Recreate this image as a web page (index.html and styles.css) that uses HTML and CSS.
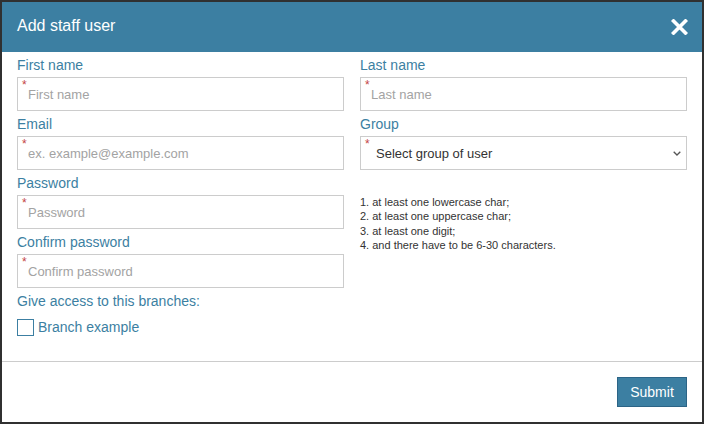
FILE: index.html
```html
<!DOCTYPE html>
<html lang="en">
<head>
<meta charset="utf-8">
<title>Add staff user</title>
<link rel="stylesheet" href="styles.css">
</head>
<body>
<div class="modal">
  <div class="modal-header">
    <h1 class="modal-title">Add staff user</h1>
    <button class="close" type="button" aria-label="Close">
      <svg width="17" height="16" viewBox="0 0 17 16"><path d="M2.5 2 L14.5 14 M14.5 2 L2.5 14" stroke="#fff" stroke-width="3.6" stroke-linecap="square" fill="none"/></svg>
    </button>
  </div>
  <div class="modal-body">
    <div class="col">
      <label class="field-label">First name</label>
      <div class="input-wrap"><span class="req">*</span><input class="input" type="text" placeholder="First name"></div>
      <label class="field-label">Email</label>
      <div class="input-wrap"><span class="req">*</span><input class="input" type="text" placeholder="ex. example@example.com"></div>
      <label class="field-label">Password</label>
      <div class="input-wrap"><span class="req">*</span><input class="input" type="password" placeholder="Password"></div>
      <label class="field-label">Confirm password</label>
      <div class="input-wrap"><span class="req">*</span><input class="input" type="password" placeholder="Confirm password"></div>
      <label class="field-label">Give access to this branches:</label>
      <label class="check-row"><span class="checkbox"></span><span>Branch example</span></label>
    </div>
    <div class="col">
      <label class="field-label">Last name</label>
      <div class="input-wrap"><span class="req">*</span><input class="input" type="text" placeholder="Last name"></div>
      <label class="field-label">Group</label>
      <div class="input-wrap"><span class="req">*</span>
        <select class="select"><option>Select group of user</option></select>
        <svg class="chevron" width="8" height="5" viewBox="0 0 8 5"><path d="M0.7 0.7 L4 4 L7.3 0.7" stroke="#555" stroke-width="1.3" fill="none"/></svg>
      </div>
      <ol class="hints">
        <li>at least one lowercase char;</li>
        <li>at least one uppercase char;</li>
        <li>at least one digit;</li>
        <li>and there have to be 6-30 characters.</li>
      </ol>
    </div>
  </div>
  <div class="modal-footer">
    <button class="btn-submit" type="button">Submit</button>
  </div>
</div>
</body>
</html>
```
FILE: styles.css
```css
html, body {
  margin: 0;
  padding: 0;
}
body {
  background: #303030;
  font-family: "Liberation Sans", Arial, sans-serif;
  padding: 2px;
}
.modal {
  width: 700px;
  height: 420px;
  background: #fff;
  display: flex;
  flex-direction: column;
}
.modal-header {
  height: 50px;
  background: #3c7fa2;
  display: flex;
  align-items: center;
  justify-content: space-between;
  padding: 0 14px 2px 15px;
  box-sizing: border-box;
}
.modal-title {
  margin: 0;
  color: #fff;
  font-size: 16px;
  font-weight: normal;
}
.close {
  background: none;
  border: 0;
  padding: 0;
  margin: 2px 0 0 0;
  display: flex;
  cursor: pointer;
}
.modal-body {
  flex: 1;
  display: grid;
  grid-template-columns: 327px 327px;
  column-gap: 16px;
  padding: 0 15px;
  align-items: start;
}
.col {
  display: flex;
  flex-direction: column;
}
.field-label {
  display: block;
  color: #3c7fa2;
  font-size: 14px;
  line-height: 23px;
  padding-top: 2px;
}
.input-wrap {
  position: relative;
}
.req {
  position: absolute;
  left: 5px;
  top: 2px;
  color: #c44545;
  font-size: 12px;
  line-height: 12px;
}
.input {
  display: block;
  width: 100%;
  height: 34px;
  box-sizing: border-box;
  border: 1px solid #ccc;
  padding: 0 10px;
  font-family: "Liberation Sans", Arial, sans-serif;
  font-size: 13px;
  color: #333;
  outline: none;
  margin: 0;
}
.input::placeholder {
  color: #a3a3a3;
}
.select {
  display: block;
  width: 100%;
  height: 34px;
  box-sizing: border-box;
  border: 1px solid #ccc;
  padding: 0 15px;
  font-family: "Liberation Sans", Arial, sans-serif;
  font-size: 13px;
  color: #333;
  background: #fff;
  appearance: none;
  -webkit-appearance: none;
  border-radius: 0;
  margin: 0;
  outline: none;
}
.chevron {
  position: absolute;
  right: 6px;
  top: 15px;
}
.hints {
  margin: 25px 0 0 0;
  padding: 0;
  list-style: decimal inside;
  font-size: 11px;
  line-height: 14.3px;
  color: #333;
}
.check-row {
  display: flex;
  align-items: center;
  gap: 4px;
  margin-top: 5px;
  color: #3c7fa2;
  font-size: 14px;
  line-height: 17px;
}
.checkbox {
  width: 17px;
  height: 17px;
  box-sizing: border-box;
  border: 1px solid #3c7fa2;
  background: #fff;
  margin-top: 1px;
}
.modal-footer {
  border-top: 1px solid #ccc;
  height: 60px;
  box-sizing: content-box;
  display: flex;
  align-items: center;
  justify-content: flex-end;
  padding: 0 15px;
}
.btn-submit {
  width: 70px;
  height: 30px;
  background: #3c7fa2;
  border: 1px solid #2c6486;
  color: #fff;
  font-family: "Liberation Sans", Arial, sans-serif;
  font-size: 14px;
  padding: 0;
  border-radius: 0;
  cursor: pointer;
}
```
